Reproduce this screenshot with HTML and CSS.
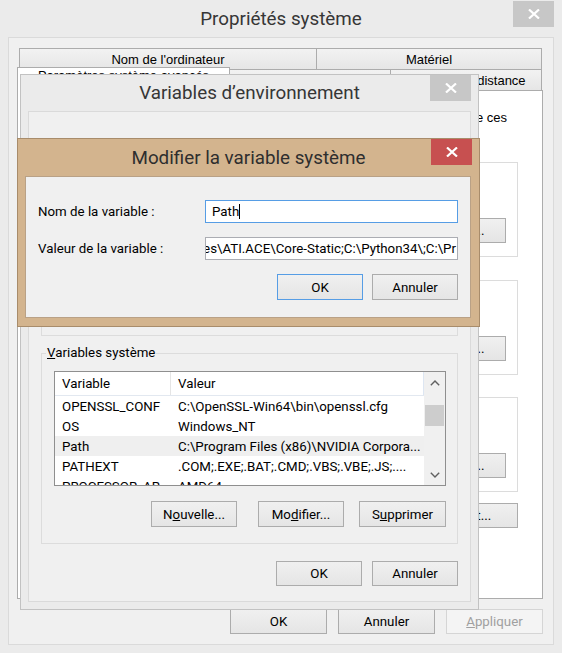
FILE: index.html
```html
<!DOCTYPE html>
<html lang="fr">
<head>
<meta charset="utf-8">
<title>Propriétés système</title>
<link rel="stylesheet" href="styles.css">
</head>
<body>
<div class="win outer">
  <div class="titlebar">
    <div class="title">Propriétés système</div>
    <div class="close close-gray"><svg width="12" height="10" viewBox="0 0 12 10"><path d="M1 0.5 L11 9.5 M11 0.5 L1 9.5" stroke="#fff" stroke-width="2.2" fill="none"/></svg></div>
  </div>
  <div class="client outer-client">
    <div class="tabctl">
      <div class="tabrow row1">
        <div class="tab tab-nom">Nom de l'ordinateur</div>
        <div class="tab tab-mat">Matériel</div>
      </div>
      <div class="tabrow row2">
        <div class="tab tab-sel">Paramètres système avancés</div>
        <div class="tab tab-prot">Protection du système</div>
        <div class="tab tab-dist">Utilisation à distance</div>
      </div>
      <div class="tabpanel">
        <div class="note"><span>Vous devez ouvrir une session d'administrateur pour effectuer la plupart de ces</span></div>
        <div class="pgroup pg1">
          <div class="pg-label">Performances</div>
          <button class="btn btn-param">Paramètres...</button>
        </div>
        <div class="pgroup pg2">
          <div class="pg-label">Profil des utilisateurs</div>
          <button class="btn btn-param">Paramètres...</button>
        </div>
        <div class="pgroup pg3">
          <div class="pg-label">Démarrage et récupération</div>
          <button class="btn btn-param">Paramètres...</button>
        </div>
        <button class="btn btn-env">Variables d'environnement...</button>
      </div>
    </div>
    <div class="dlg-buttons">
      <button class="btn btn-outer">OK</button>
      <button class="btn btn-outer">Annuler</button>
      <button class="btn btn-outer btn-disabled"><u>A</u>ppliquer</button>
    </div>
  </div>

  <div class="win mid">
    <div class="titlebar">
      <div class="title">Variables d’environnement</div>
      <div class="close close-gray"><svg width="12" height="10" viewBox="0 0 12 10"><path d="M1 0.5 L11 9.5 M11 0.5 L1 9.5" stroke="#fff" stroke-width="2.2" fill="none"/></svg></div>
    </div>
    <div class="client mid-client">
      <fieldset class="group group-user">
        <legend><u>V</u>ariables utilisateur pour Utilisateur</legend>
        <div class="user-buttons">
          <button class="btn btn-mid">Nouvelle...</button>
          <button class="btn btn-mid">Modifier...</button>
          <button class="btn btn-mid">Supprimer</button>
        </div>
      </fieldset>
      <fieldset class="group group-sys">
        <legend><u>V</u>ariables système</legend>
        <div class="listbox">
          <div class="lv">
            <div class="lv-head">
              <div class="c1 hc1">Variable</div>
              <div class="c2 hc2">Valeur</div>
            </div>
            <div class="lv-row"><div class="c1">OPENSSL_CONF</div><div class="c2">C:\OpenSSL-Win64\bin\openssl.cfg</div></div>
            <div class="lv-row"><div class="c1">OS</div><div class="c2">Windows_NT</div></div>
            <div class="lv-row lv-sel"><div class="c1">Path</div><div class="c2">C:\Program Files (x86)\NVIDIA Corpora...</div></div>
            <div class="lv-row"><div class="c1">PATHEXT</div><div class="c2">.COM;.EXE;.BAT;.CMD;.VBS;.VBE;.JS;....</div></div>
            <div class="lv-row"><div class="c1">PROCESSOR_AR...</div><div class="c2">AMD64</div></div>
          </div>
          <div class="vscroll">
            <div class="sb-btn"><svg width="10" height="6" viewBox="0 0 10 6"><path d="M0.8 5.3 L5 1.1 L9.2 5.3" stroke="#606060" stroke-width="1.4" fill="none"/></svg></div>
            <div class="sb-track"><div class="sb-thumb"></div></div>
            <div class="sb-btn"><svg width="10" height="6" viewBox="0 0 10 6"><path d="M0.8 0.7 L5 4.9 L9.2 0.7" stroke="#606060" stroke-width="1.4" fill="none"/></svg></div>
          </div>
        </div>
        <div class="sys-buttons">
          <button class="btn btn-new">N<u>o</u>uvelle...</button>
          <button class="btn btn-mod">Mo<u>d</u>ifier...</button>
          <button class="btn btn-del">S<u>u</u>pprimer</button>
        </div>
      </fieldset>
      <div class="mid-buttons">
        <button class="btn btn-mid">OK</button>
        <button class="btn btn-mid">Annuler</button>
      </div>
    </div>
  </div>

  <div class="win front">
    <div class="titlebar">
      <div class="title">Modifier la variable système</div>
      <div class="close close-red"><svg width="12" height="10" viewBox="0 0 12 10"><path d="M1 0.5 L11 9.5 M11 0.5 L1 9.5" stroke="#fff" stroke-width="2.2" fill="none"/></svg></div>
    </div>
    <div class="client front-client">
      <label class="flabel">Nom de la variable :</label>
      <div class="textbox focused"><span>Path</span><span class="caret"></span></div>
      <label class="flabel">Valeur de la variable :</label>
      <div class="textbox scrolled"><span>C:\Program Files (x86)\ATI Technologies\ATI.ACE\Core-Static;C:\Python34\;C:\Pr</span></div>
      <div class="front-buttons">
        <button class="btn btn-mid btn-default">OK</button>
        <button class="btn btn-mid">Annuler</button>
      </div>
    </div>
  </div>
</div>
</body>
</html>
```

FILE: styles.css
```css
* { box-sizing: border-box; }
html, body { margin: 0; padding: 0; }
body {
  width: 562px;
  height: 653px;
  overflow: hidden;
  background: #ebebeb;
  font-family: Roboto, "Noto Sans", sans-serif;
  font-size: 13.3px;
  color: #000;
}
.win { display: flex; flex-direction: column; }
.outer { position: relative; width: 562px; height: 653px; background: #ebebeb; }

.titlebar {
  display: grid;
  grid-template-columns: 1fr auto 1fr;
  align-items: center;
  flex-shrink: 0;
}
.titlebar .title {
  grid-column: 2;
  font-size: 18.8px;
  color: #363636;
  white-space: nowrap;
}
.close {
  grid-column: 3;
  justify-self: end;
  align-self: start;
  width: 41px;
  height: 26px;
  display: flex;
  align-items: center;
  justify-content: center;
}
.close-gray { background: #c7c7c7; }
.close-red { background: #c75050; }

.outer > .titlebar { height: 37px; padding: 0 8px; }
.outer > .titlebar .close { margin-top: 1px; }

.outer-client {
  margin: 0 8px;
  height: 608px;
  border: 1px solid #dadada;
  background: #f0f0f0;
  padding: 10px 10px 0 8px;
  display: flex;
  flex-direction: column;
}

/* tabs */
.tabctl {
  display: flex;
  flex-direction: column;
  font-family: "Liberation Sans", Arial, sans-serif;
  font-size: 13px;
}
.tabrow { display: flex; height: 21px; }
.row1 { padding-left: 2px; }
.tab {
  height: 21px;
  border: 1px solid #acacac;
  border-bottom: none;
  background: linear-gradient(#f2f2f2, #e6e6e6);
  display: flex;
  align-items: center;
  justify-content: center;
  white-space: nowrap;
  overflow: hidden;
}
.tab + .tab { margin-left: -1px; }
.tab-nom { width: 298px; }
.tab-mat { width: 226px; }
.tab-sel {
  width: 213px;
  height: 24px;
  margin-top: -2px;
  background: #fff;
  position: relative;
  z-index: 1;
  align-self: flex-start;
  align-items: flex-start;
  padding-top: 0;
  line-height: 15px;
}
.tab-prot { width: 162px; }
.tab-dist { width: 152px; }

.tabpanel {
  height: 509px;
  border: 1px solid #acacac;
  background: #fff;
  padding: 19px 24px 0 10px;
  display: flex;
  flex-direction: column;
}
.note {
  margin-right: 11px;
  line-height: 15px;
  white-space: nowrap;
  overflow: hidden;
  display: flex;
  justify-content: flex-end;
}
.note span { flex-shrink: 0; }

.pgroup {
  height: 95px;
  margin-top: 23px;
  border: 1px solid #dcdcdc;
  padding: 4px 11px 13px 10px;
  display: flex;
  flex-direction: column;
  justify-content: space-between;
  align-items: flex-end;
}
.pg1 { margin-top: 37px; }
.pg3 { margin-top: 22px; }
.pg-label { align-self: flex-start; }

/* buttons */
.btn {
  height: 25px;
  border: 1px solid #acacac;
  background: linear-gradient(#f0f0f0, #e5e5e5);
  font-family: Roboto, "Noto Sans", sans-serif;
  font-size: 13.3px;
  color: #000;
  padding: 0;
  margin: 0;
  display: flex;
  align-items: center;
  justify-content: center;
  white-space: nowrap;
}
.btn-param { width: 122px; }
.btn-env { width: 220px; margin-top: 11px; align-self: flex-end; }

.dlg-buttons {
  display: flex;
  justify-content: flex-end;
  gap: 11px;
  margin-top: 10px;
}
.btn-outer { width: 97px; }
.btn-disabled {
  border-color: #d5d5d5;
  background: #f4f4f4;
  color: #a0a0a0;
}

/* middle dialog */
.mid {
  position: absolute;
  z-index: 2;
  left: 20px;
  top: 74px;
  width: 459px;
  height: 536px;
  border: 1px solid #c2c2c2;
  background: #ebebeb;
}
.mid > .titlebar { height: 36px; padding: 0 7px; }
.mid-client {
  flex: 1;
  margin: 0 7px 7px;
  border: 1px solid #dadada;
  background: #f0f0f0;
  padding: 0 12px;
  display: flex;
  flex-direction: column;
}
.group {
  margin: 0;
  border: 1px solid #dcdcdc;
  padding: 0 11px 16px 12px;
  min-width: 0;
}
.group legend {
  margin-left: -8px;
  padding: 0 1px;
  line-height: 16px;
}
.group-user {
  margin-top: 34px;
  height: 190px;
  display: flex;
  flex-direction: column;
  justify-content: flex-end;
  padding-bottom: 13px;
}
.user-buttons { display: flex; justify-content: flex-end; gap: 12px; }
.group-sys { margin-top: 9px; }

.listbox {
  margin-top: 10px;
  height: 115px;
  border: 1px solid #8f8f8f;
  background: #fff;
  display: flex;
  overflow: hidden;
}
.lv { flex: 1; min-width: 0; overflow: hidden; }
.lv-head {
  display: flex;
  height: 24px;
  align-items: stretch;
  border-bottom: 1px solid #e2e8f0;
}
.lv-head .c1, .lv-head .c2 { display: flex; align-items: center; }
.hc1 { border-right: 1px solid #e5e5e5; }
.hc2 { border-right: 1px solid #dde6f2; }
.c1 {
  width: 116px;
  flex-shrink: 0;
  padding-left: 7px;
  white-space: nowrap;
  overflow: hidden;
}
.c2 {
  flex: 1;
  padding-left: 7px;
  white-space: nowrap;
  overflow: hidden;
}
.lv-row { display: flex; height: 20px; align-items: center; }
.lv-sel { background: #efefef; }

.vscroll {
  width: 21px;
  flex-shrink: 0;
  background: #f0f0f0;
  display: flex;
  flex-direction: column;
}
.sb-btn {
  height: 21px;
  display: flex;
  align-items: center;
  justify-content: center;
}
.sb-track { flex: 1; display: flex; flex-direction: column; align-items: center; }
.sb-thumb { width: 19px; height: 21px; background: #cdcdcd; margin-top: 12px; }

.sys-buttons { display: flex; justify-content: flex-end; margin-top: 15px; }
.sys-buttons .btn { height: 26px; }
.btn-new { width: 86px; }
.btn-mod { width: 86px; margin-left: 21px; }
.btn-del { width: 87px; margin-left: 15px; }

.mid-buttons { display: flex; justify-content: flex-end; gap: 10px; margin-top: 17px; }
.btn-mid { width: 86px; }

/* front dialog */
.front {
  position: absolute;
  z-index: 3;
  left: 17px;
  top: 138px;
  width: 463px;
  height: 189px;
  border: 1px solid #a88c6b;
  background: #d3b48e;
}
.front > .titlebar { height: 37px; padding: 0 7px; }
.front .title { color: #2e2e2e; }
.front-client {
  flex: 1;
  margin: 0 8px 8px 7px;
  border: 1px solid #b9a186;
  background: #f0f0f0;
  padding: 23px 0 0 12px;
  display: grid;
  grid-template-columns: 167px 253px;
  grid-auto-rows: 23px;
  row-gap: 14px;
  align-items: center;
  align-content: start;
}
.flabel { white-space: nowrap; }
.textbox {
  height: 23px;
  border: 1px solid #abadb3;
  background: #fff;
  display: flex;
  align-items: center;
  overflow: hidden;
  white-space: nowrap;
  padding: 0 6px;
}
.textbox span { flex-shrink: 0; }
.textbox.focused { border-color: #569de5; }
.textbox.scrolled { justify-content: flex-end; padding: 0 1px 0 0; }
.caret { width: 1px; height: 15px; background: #000; }
.front-buttons {
  grid-column: 1 / -1;
  justify-self: end;
  margin-top: 3px;
  display: flex;
  gap: 9px;
}
.front-buttons .btn { height: 26px; }
.btn-default { border-color: #569de5; }
```
